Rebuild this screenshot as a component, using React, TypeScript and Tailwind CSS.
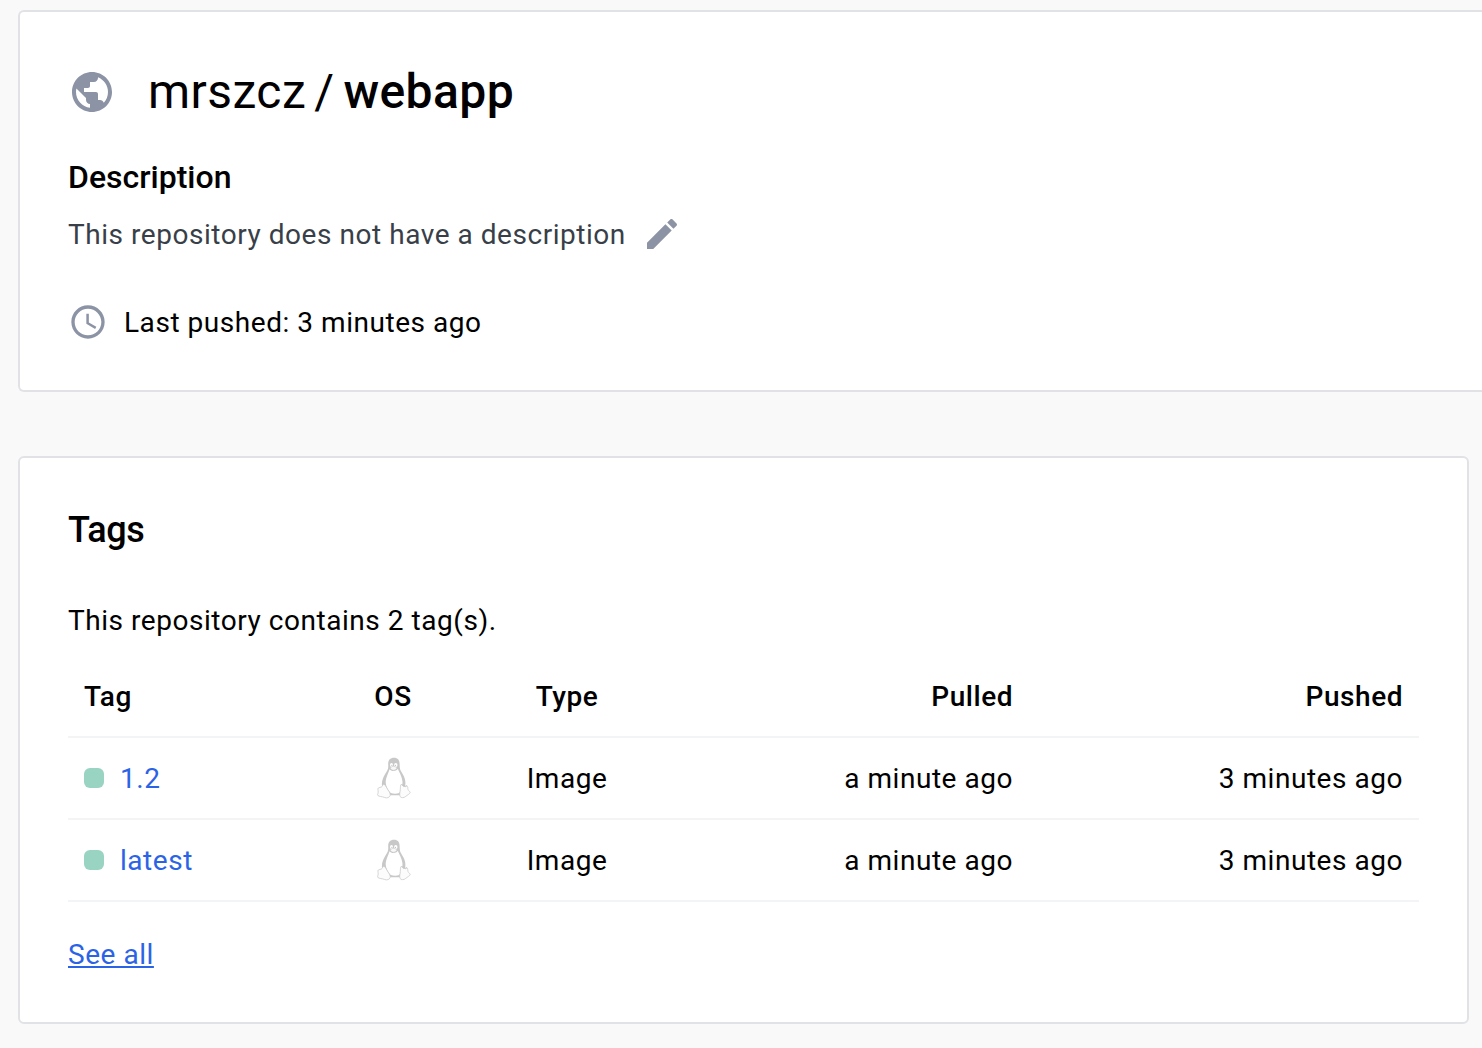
import React from 'react';

const GlobeIcon = () => (
  <svg viewBox="0 0 24 24" className="size-12 shrink-0 fill-[#8b93a5]">
    <path d="M12 2C6.48 2 2 6.48 2 12s4.48 10 10 10 10-4.48 10-10S17.52 2 12 2zm-1 17.93c-3.95-.49-7-3.85-7-7.93 0-.62.08-1.21.21-1.79L9 15v1c0 1.1.9 2 2 2v1.93zm6.9-2.54c-.26-.81-1-1.39-1.9-1.39h-1v-3c0-.55-.45-1-1-1H8v-2h2c.55 0 1-.45 1-1V7h2c1.1 0 2-.9 2-2v-.41c2.93 1.19 5 4.06 5 7.41 0 2.08-.8 3.97-2.1 5.39z" />
  </svg>
);

const PencilIcon = () => (
  <svg viewBox="0 0 24 24" className="size-10 shrink-0 fill-[#8b93a5]">
    <path d="M3 17.25V21h3.75L17.81 9.94l-3.75-3.75L3 17.25zM20.71 7.04c.39-.39.39-1.02 0-1.41l-2.34-2.34c-.39-.39-1.02-.39-1.41 0l-1.83 1.83 3.75 3.75 1.83-1.83z" />
  </svg>
);

const ClockIcon = () => (
  <svg viewBox="0 0 24 24" className="size-10 shrink-0 fill-[#8b93a5]">
    <path d="M11.99 2C6.47 2 2 6.48 2 12s4.47 10 9.99 10C17.52 22 22 17.52 22 12S17.52 2 11.99 2zM12 20c-4.42 0-8-3.58-8-8s3.58-8 8-8 8 3.58 8 8-3.58 8-8 8z" />
    <path d="M12.5 7H11v6l5.25 3.15.75-1.23-4.5-2.67z" />
  </svg>
);

const PenguinIcon = () => (
  <svg viewBox="0 0 34 42" className="ml-0.5 h-[42px] w-[34px]">
    <path
      d="M17 .8c-3.900 0-5.900 2.400-5.800 6.200.1 3.200.300 4.800-1.500 7.600-2.700 4.200-5.100 8.500-4.800 13.300l5.800 10.400h14.600l3-10.800c.8-5.200-2-9.300-4.100-12.900-1.600-2.700-1.500-4.900-1.600-7.900C22.400 3.100 20.800.8 17 .8z"
      fill="#c8c8c8"
    />
    <path
      d="M12.500 12.200c1.700 2.600 6.900 2.400 8.300-.4 1.300 3.400 4.300 7.800 4.700 12.700.2 4.300-1.100 8.700-3.300 11.400-2.400 1.100-5.900 1.100-8.400 0-2.500-2.700-5.300-6.600-5.100-11.700.2-4 3-8.400 3.800-12z"
      fill="#ffffff"
    />
    <ellipse cx="14.500" cy="8" rx="1.500" ry="1.900" fill="#fff" />
    <ellipse cx="18.800" cy="8" rx="1.700" ry="2" fill="#fff" />
    <circle cx="14.900" cy="8.300" r=".6" fill="#bbb" />
    <circle cx="18.500" cy="8.300" r=".6" fill="#bbb" />
    <path d="M13.200 11c1.300-1.200 2.300-1.700 3.300-1.700s2.300.7 3.500 1.400c-.5 1.300-2.100 2.500-3.500 2.500s-2.500-.9-3.300-2.200z" fill="#f8f8f8" stroke="#cfcfcf" strokeWidth=".6" />
    <path d="M6.500 27.400c-1.100.6-1 2.200-2.300 2.700-1.500.5-3 .3-3.300 1.700-.2 1.200.6 2.100.3 3.500-.2 1.300-1 2.300-.3 3.200.9 1 4.600 1.100 6.800 2 2.300.9 4.700.1 5.400-1.900.6-2-.9-3.800-2.200-5.800-1.300-2-2.700-5.700-4.400-5.400z" fill="#fcfcfc" stroke="#cccccc" strokeWidth=".8" />
    <path d="M24.500 27.200c-1.300.6-1 3-1.200 5.500-.2 2.400-1.100 5-.2 6.800.8 1.600 4.100 1.500 5.700-.1 1.300-1.300 4.200-2.600 4.400-3.800.2-1-1.600-1.500-2.200-3.100-.4-1.400.1-2.600-.9-3.500-1 .9-3.600 1.200-5.600-1.800z" fill="#fcfcfc" stroke="#cccccc" strokeWidth=".8" />
    <path d="M25 27.300c.7 2.300 4.100 2.500 4.900.8" fill="none" stroke="#c6c6c6" strokeWidth="1" />
  </svg>
);

const rows = [
  { tag: '1.2', type: 'Image', pulled: 'a minute ago', pushed: '3 minutes ago' },
  { tag: 'latest', type: 'Image', pulled: 'a minute ago', pushed: '3 minutes ago' },
];

export default function App() {
  return (
    <div className="h-[1048px] overflow-hidden bg-[#f9f9f9] pt-[10px] pl-[18px] font-['Roboto',sans-serif] text-[28px] leading-10 tracking-[0.54px] text-black">
      <section className="h-[382px] rounded-l-[6px] border-2 border-r-0 border-[#e1e2e6] bg-white px-12 pt-12">
        <header className="flex h-16 items-center gap-8">
          <GlobeIcon />
          <h1 className="text-[48px] leading-16 tracking-[0.44px] whitespace-pre">
            <span>mrszcz</span>
            <span className="mr-[9px] ml-2">/</span>
            <span className="font-medium">webapp</span>
          </h1>
        </header>
        <h2 className="mt-[33px] text-[32px] leading-10 font-medium tracking-normal">Description</h2>
        <div className="mt-4 flex items-center gap-4 text-[#393f49]">
          <p className="pt-0.5">This repository does not have a description</p>
          <PencilIcon />
        </div>
        <div className="mt-[46px] flex items-center gap-4">
          <ClockIcon />
          <p className="pt-0.5">Last pushed: 3 minutes ago</p>
        </div>
      </section>

      <section className="mt-16 h-[568px] w-[1451px] rounded-[6px] border-2 border-[#e1e2e6] bg-white px-12 pt-12">
        <h2 className="text-[36px] leading-12 font-medium tracking-[-0.4px]">Tags</h2>
        <p className="mt-[47px]">This repository contains 2 tag(s).</p>
        <table className="mt-3.5 w-[1351px] table-fixed border-collapse">
          <colgroup>
            <col className="w-[259px]" />
            <col className="w-[132px]" />
            <col className="w-[216px]" />
            <col className="w-[354px]" />
            <col className="w-[390px]" />
          </colgroup>
          <thead>
            <tr className="h-[82px] border-b-2 border-[#f3f4f6] *:pt-0.5 *:font-medium">
              <th className="px-4 text-left">Tag</th>
              <th>OS</th>
              <th>Type</th>
              <th className="px-4 text-right">Pulled</th>
              <th className="px-4 text-right">Pushed</th>
            </tr>
          </thead>
          <tbody>
            {rows.map((row) => (
              <tr key={row.tag} className="h-[82px] border-b-2 border-[#f3f4f6]">
                <td className="px-4">
                  <div className="flex items-center gap-4">
                    <span className="size-5 rounded-[6px] bg-[#99d3c1]" />
                    <a className="pt-0.5 text-[#2b63e6]">{row.tag}</a>
                  </div>
                </td>
                <td>
                  <div className="flex justify-center">
                    <PenguinIcon />
                  </div>
                </td>
                <td className="pt-0.5 text-center">{row.type}</td>
                <td className="px-4 pt-0.5 text-right">{row.pulled}</td>
                <td className="px-4 pt-0.5 text-right">{row.pushed}</td>
              </tr>
            ))}
          </tbody>
        </table>
        <a className="mt-[33px] inline-block text-[#2b63e6] underline">See all</a>
      </section>
    </div>
  );
}
